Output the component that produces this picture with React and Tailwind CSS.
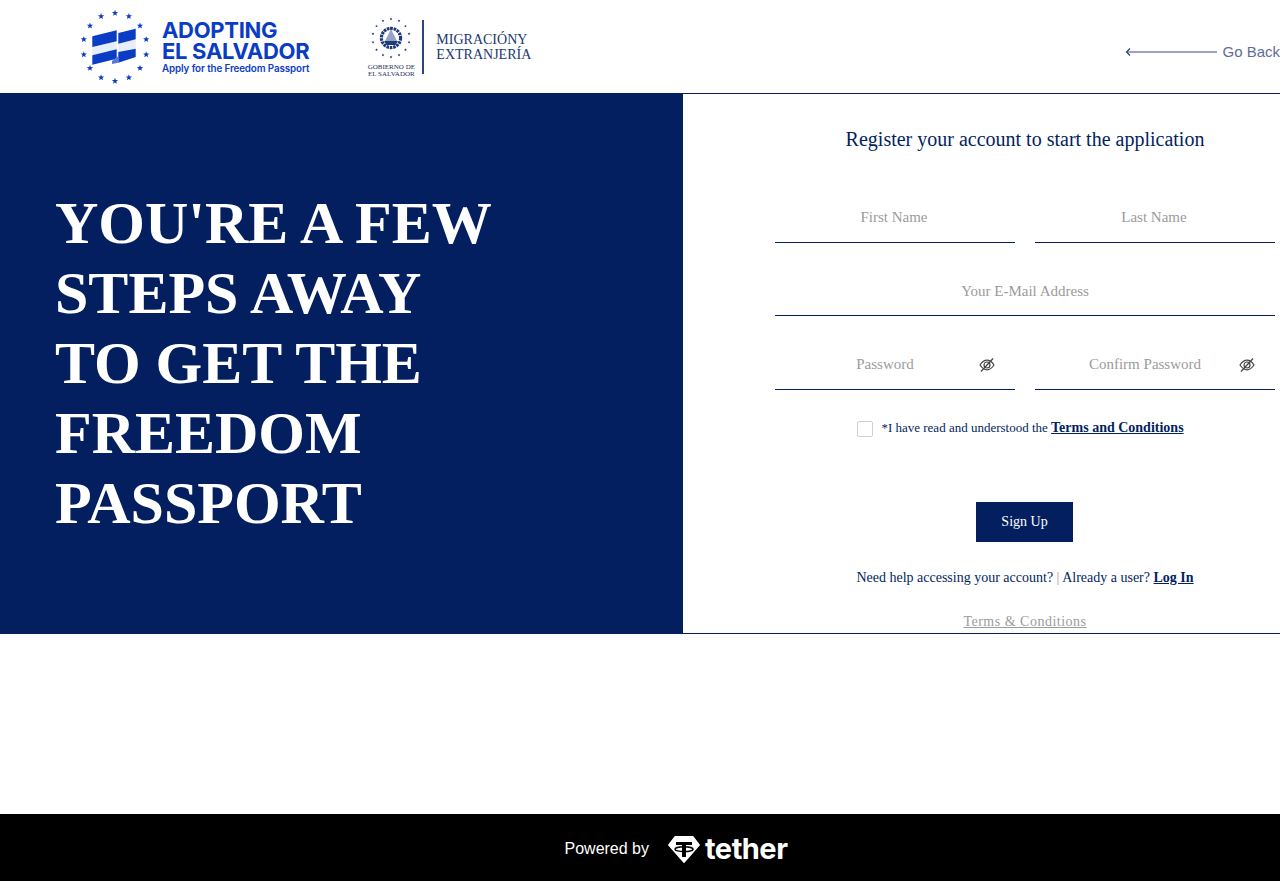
function Star({ x, y, r = 3.2, fill }) {
  const pts = [];
  for (let i = 0; i < 10; i++) {
    const a = -Math.PI / 2 + (i * Math.PI) / 5;
    const rr = i % 2 === 0 ? r : r * 0.42;
    pts.push(`${(x + rr * Math.cos(a)).toFixed(2)},${(y + rr * Math.sin(a)).toFixed(2)}`);
  }
  return <polygon points={pts.join(" ")} fill={fill} />;
}

function StarRing({ cx, cy, rx, ry, n, r, fill }) {
  return (
    <>
      {Array.from({ length: n }).map((_, i) => {
        const a = -Math.PI / 2 + (i * 2 * Math.PI) / n;
        return <Star key={i} x={cx + rx * Math.cos(a)} y={cy + ry * Math.sin(a)} r={r} fill={fill} />;
      })}
    </>
  );
}

function FlagLogo() {
  const blue = "#0a3cc4";
  return (
    <svg width="72" height="74" viewBox="0 0 72 74" className="shrink-0">
      <StarRing cx={36} cy={37} rx={32} ry={34} n={14} r={3.3} fill={blue} />
      <path d="M13.3 37 L37.7 31.3 V39.3 L13.3 45.3 Z" fill="#e8edfa" />
      <path d="M39.3 33.7 L56.7 29.3 V38.7 L39.3 42 Z" fill="#e8edfa" />
      <path d="M13.3 26.3 L37.7 20.3 V31.3 L13.3 37 Z" fill={blue} />
      <path d="M13.3 45.3 L37.7 39.3 V48.7 L13.3 54.7 Z" fill={blue} />
      <path d="M39.3 23 L56.7 18.7 V29.3 L39.3 33.7 Z" fill={blue} />
      <path d="M39.3 42 L56.7 38.7 V47 L39.3 52.7 Z" fill={blue} />
      <path d="M33 51 L39.3 46 V52.7 L33 54 Z" fill="#5a78d8" />
    </svg>
  );
}

function Arms() {
  const c = "#1f3a78";
  return (
    <svg width="44" height="44" viewBox="0 0 44 44">
      <StarRing cx={22} cy={22} rx={18.5} ry={19} n={14} r={1.5} fill="#1a2f6d" />
      <circle cx="22" cy="22" r="9.6" fill="#fff" stroke={c} strokeWidth="3.2" strokeDasharray="2.6 0.8" />
      <path d="M22 13 L28 25 H16 Z" fill="#94a3c7" />
      <path d="M22 11 V14" stroke={c} strokeWidth="1.4" />
      <path d="M15 25 H29 L26.5 29 H17.5 Z" fill={c} />
    </svg>
  );
}

function EyeSlash() {
  return (
    <svg width="16" height="16" viewBox="0 0 16 16" fill="none" stroke="#444" strokeWidth="1.2">
      <path d="M1 8 C3.5 4.2 5.8 3.2 8 3.2 S12.5 4.2 15 8 C12.5 11.8 10.2 12.8 8 12.8 S3.5 11.8 1 8 Z" />
      <circle cx="8" cy="8" r="3" />
      <path d="M14 1.5 L2 14.5" strokeWidth="1.3" />
    </svg>
  );
}

function Field({ placeholder, type = "text", eye = false, nudge = false, className = "", inputClass = "" }) {
  return (
    <div className={`relative h-[50px] border-b border-[#031f60] ${className}`}>
      <input
        type={type}
        placeholder={placeholder}
        className={`h-[49px] w-full bg-transparent text-center text-[15px] text-[#031f60] outline-none placeholder:text-[#9b9b9b] ${eye ? "pr-5" : ""} ${nudge ? "pr-[2px]" : ""} ${inputClass}`}
      />
      {eye && (
        <span className="absolute right-5 top-[17px]">
          <EyeSlash />
        </span>
      )}
    </div>
  );
}

export default function App() {
  return (
    <div className="flex min-h-[881px] flex-col bg-white font-['Liberation_Serif',serif]">
      <header className="flex h-[94px] items-stretch justify-between border-b border-[#031f60]">
        <div className="flex items-center pl-[79px]">
          <div className="flex items-center gap-[11px]">
            <FlagLogo />
            <div className="mt-[2px] font-['Inter',sans-serif] text-[#0a3cc4]">
              <div className="text-[22px] font-bold leading-[21px] tracking-[-0.3px]">ADOPTING</div>
              <div className="text-[22px] font-bold leading-[21px] tracking-[-0.3px]">EL SALVADOR</div>
              <div className="mt-[1px] whitespace-nowrap text-[9.8px] font-semibold leading-[12px] tracking-[-0.1px]">Apply for the Freedom Passport</div>
            </div>
          </div>
          <div className="ml-[58px] flex items-center">
            <div className="flex w-[48px] flex-col items-center">
              <Arms />
              <div className="mt-[4px] whitespace-nowrap text-center text-[7px] leading-[7px] text-[#1f2f5f]">
                GOBIERNO DE<br />EL SALVADOR
              </div>
            </div>
            <div className="ml-[7px] h-[54px] w-[2px] bg-[#2c457f]" />
            <div className="ml-[12px] text-[14px] leading-[15px] text-[#22386f]">
              <div>MIGRACIÓNY</div>
              <div>EXTRANJERÍA</div>
            </div>
          </div>
        </div>
        <a className="mt-[43px] flex h-[18px] items-center gap-[5px] font-['Liberation_Sans',sans-serif] text-[15px] text-[#5f6c99]">
          <svg width="92" height="10" viewBox="0 0 92 10" fill="none">
            <path d="M92 5 H2" stroke="#7b86a8" strokeWidth="1.6" />
            <path d="M5 1.5 L1.5 5 L5 8.5" stroke="#2a3a70" strokeWidth="1.2" />
          </svg>
          Go Back
        </a>
      </header>

      <main className="flex h-[540px] border-b border-[#031f60]">
        <section className="flex w-[683px] items-center bg-[#031f60] pb-[2px] pl-[55px]">
          <h1 className="w-[500px] text-[60px] font-bold leading-[70px] text-white">
            YOU'RE A FEW<br />STEPS AWAY<br />TO GET THE<br />FREEDOM<br />PASSPORT
          </h1>
        </section>
        <section className="flex flex-1 flex-col pl-[92px] pr-[5px] text-[#031f60]">
          <h2 className="mt-[32px] text-center text-[20px] leading-[26px]">Register your account to start the application</h2>
          <div className="mt-[41px] grid grid-cols-2 gap-x-5">
            <Field placeholder="First Name" nudge />
            <Field placeholder="Last Name" nudge />
          </div>
          <Field placeholder="Your E-Mail Address" className="mt-[23px]" inputClass="pt-[2px]" />
          <div className="mt-[24px] grid grid-cols-2 gap-x-5">
            <Field placeholder="Password" type="password" eye />
            <Field placeholder="Confirm Password" type="password" eye />
          </div>
          <div className="mt-[29px] flex h-[20px] items-start justify-center pr-[9px]">
            <span className="mt-[2px] h-4 w-4 rounded-[2px] border border-[#d0d0d0] bg-white" />
            <p className="ml-[8px] text-[13px] leading-[18px]">
              *I have read and understood the{" "}
              <a className="text-[14px] font-bold underline">Terms and Conditions</a>
            </p>
          </div>
          <div className="ml-[201px] mt-[63px] flex">
            <button className="h-10 w-[97px] bg-[#031f60] pb-[2px] text-[14px] text-white">Sign Up</button>
          </div>
          <p className="mt-[27px] text-center text-[14px] leading-[18px]">
            Need help accessing your account? <span className="text-[#9b9b9b]">|</span> Already a user?{" "}
            <a className="font-bold underline">Log In</a>
          </p>
          <p className="mt-[26px] text-center text-[14px] leading-[18px] tracking-[0.5px]">
            <a className="text-[#9b9b9b] underline">Terms &amp; Conditions</a>
          </p>
        </section>
      </main>

      <div className="h-[180px]" />

      <footer className="flex h-[67px] items-center justify-center bg-black pl-[72px] text-white">
        <span className="mt-[2px] font-['Liberation_Sans',sans-serif] text-[16px]">Powered by</span>
        <span className="ml-[19px] mt-[3px] flex items-center gap-[5px]">
          <svg width="32" height="27" viewBox="0 0 32 27">
            <path d="M7 0.8 H25 L31.2 9 L16 26.2 L0.8 9 Z" fill="#fff" strokeLinejoin="round" stroke="#fff" strokeWidth="1.4" />
            <path d="M8 6 H24 V9 H18 V21 H14 V9 H8 Z" fill="#000" />
            <ellipse cx="16" cy="13.2" rx="9" ry="2.4" fill="none" stroke="#000" strokeWidth="1.5" />
          </svg>
          <span className="font-['Inter',sans-serif] text-[29px] font-bold leading-[30px] tracking-[-0.5px]">tether</span>
        </span>
      </footer>
    </div>
  );
}
